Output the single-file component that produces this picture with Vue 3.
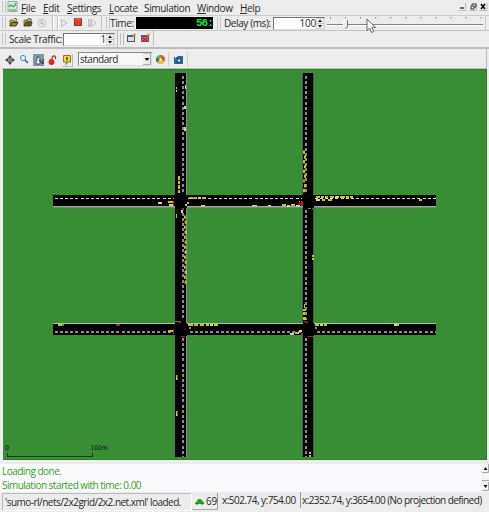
<script setup>
const menus = [
  { k: 'F', r: 'ile', w: 22 },
  { k: 'E', r: 'dit', w: 24 },
  { k: 'S', r: 'ettings', w: 42 },
  { k: 'L', r: 'ocate', w: 35 },
  { k: '', r: 'Simulation', w: 53 },
  { k: 'W', r: 'indow', w: 43 },
  { k: 'H', r: 'elp', w: 30 },
]
const ticks = Array.from({ length: 11 }, (_, i) => 331.5 + i * 15.05)

// [x, y, width, height, colour]
const y = '#c9c02c', r = '#b3241c', w = '#d8d2a0', g = '#24b43a'
const cars = [
  [176, 87, 1, 2, y], [176, 90, 1, 2, w], [185, 85, 1, 4, w], [184, 106, 2, 3, w], [184, 127, 2, 4, w],
  [178, 176, 2, 4, y], [178, 181, 2, 3, y], [178, 185, 2, 4, y], [178, 190, 2, 3, y],
  [158, 202, 4, 2, w], [168, 201, 5, 2, y], [169, 204, 4, 2, w], [173, 201, 1, 5, r],
  [201, 205, 4, 1.5, w], [187, 202, 2, 2, y], [185, 204, 2, 2, y],
  [189, 197, 4, 2, y], [194, 197, 3, 2, y], [198, 197, 3, 2, w], [202, 197, 4, 2, y],
  [182, 208, 2, 2, r], [181, 210, 2, 3, w], [176, 214, 1, 4, y],
  [252, 205, 5, 1.5, w], [268, 205, 3, 1.5, w], [282, 204, 4, 2, y], [287, 205, 3, 2, w], [291, 204, 4, 2, y], [296, 205, 4, 2, w],
  [298, 203, 4, 2, '#872015'], [301, 201, 2, 5, r], [299, 201, 1, 1, w],
  [308, 208, 3, 1, g], [312, 208, 2, 2, r],
  [316, 196, 4, 2, y], [321, 196, 3, 2, y], [325, 196, 3, 2, y], [330, 196, 4, 2, y], [335, 196, 4, 2, w], [340, 196, 5, 2, y], [346, 196, 3, 2, y], [350, 196, 3, 2, y],
  [316, 199, 4, 2, w], [322, 199, 3, 2, y], [328, 199, 4, 2, y], [419, 199, 3, 2, y],
  [175, 321, 3, 1, g], [178, 321, 3, 2, r],
  [188, 324, 5, 2, y], [194, 324, 4, 2, y], [200, 324, 4, 2, y], [206, 324, 3, 2, y], [210, 324, 3, 2, w], [214, 324, 4, 2, y],
  [189, 327, 2, 2, '#888'], [168, 330, 5, 2, y], [173, 329, 1, 5, r], [181, 336, 4, 1, r],
  [312, 255, 2, 2, y], [312, 258, 2, 2, y],
  [304, 304, 1, 4, y], [303, 309, 3, 2, y], [303, 312, 2, 3, y], [303, 317, 3, 3, y], [304, 321, 2, 1, r], [305, 322, 3, 1, r],
  [315, 324, 4, 2, y], [320, 324, 3, 2, w], [324, 324, 3, 2, y], [315, 327, 2, 2, '#888'],
  [290, 333, 4, 2, w], [295, 332, 4, 2, y], [299, 330, 3, 2, w], [301, 333, 2, 2, r], [308, 336, 5, 1, r],
  [58, 324, 4, 2, y], [62, 324, 2, 2, '#777'], [116, 324, 4, 2, r], [394, 324, 3, 2, w], [397, 324, 2, 2, y],
  [176, 375, 1.5, 3, y], [176, 378, 1.5, 2, w], [176, 411, 1.5, 3, y], [176, 414, 1.5, 2, w],
  [309, 452, 2, 2, y], [309, 455, 2, 2, y],
]
// queues standing on the vertical approaches
for (let i = 0; i < 14; i++) cars.push([184 + (i % 2) * 0.6, 215.5 + i * 5, 1.8, 3.3, i % 4 === 3 ? w : y])
for (let i = 0; i < 9; i++) cars.push([303 + (i % 2), 150.5 + i * 4.8, 2, 3.4, i === 6 ? '#c0812c' : y])
</script>

<template>
  <div class="app">
    <header class="menubar">
      <i class="grip" />
      <svg class="logo" width="11" height="12" viewBox="0 0 11 12">
        <rect x="1" y="0.5" width="9" height="10" fill="#d5e8da" stroke="#8db49a" />
        <path d="M2 6Q3 3 5 5T9 2M2 9H9" fill="none" stroke="#3d9c59" stroke-width="1.2" />
      </svg>
      <nav>
        <span v-for="m in menus" :key="m.r" class="menu" :style="{ width: m.w + 'px' }"><u>{{ m.k }}</u>{{ m.r }}</span>
      </nav>
      <svg class="winctl" width="30" height="9" viewBox="0 0 30 9">
        <path d="M.5 8.5H7.5V1M11.5 8.5H18.5V1M21.5 8.5H29V1" stroke="#bbb" fill="none" />
        <path d="M2 6H6" stroke="#222" stroke-width="1.3" />
        <path d="M13 4H16V7H13ZM14 3.5V2H18V5H16" stroke="#333" fill="none" />
        <path d="M23 2L27 7M27 2L23 7" stroke="#000" stroke-width="1.5" />
      </svg>
    </header>

    <div class="bar tools">
      <i class="grip" />
      <svg class="icons run" width="98" height="14" viewBox="6 16 98 14">
        <path d="M10 20H13L14 21H17V22H12L10 26Z" fill="#c8bd35" stroke="#4c4b1c" stroke-width=".7" />
        <path d="M10 26L12 22.5H18L16 26Z" fill="#8f8828" stroke="#26270e" stroke-width=".8" />
        <path d="M14 19Q16 17.5 17 20" fill="none" stroke="#333" />
        <path d="M24 20H27L28 21H31V22H26L24 26Z" fill="#c8bd35" stroke="#4c4b1c" stroke-width=".7" />
        <path d="M24 26L26 22H32L31 26Z" fill="#77732c" stroke="#26270e" stroke-width=".8" />
        <path d="M27 20L29 18.5L32 20M27 24H30" fill="none" stroke="#333" />
        <circle cx="42" cy="23" r="4" fill="#e7e7e7" stroke="#c4c4c4" />
        <path d="M40 23.5H44M42 20V23M40 21L44 25" fill="none" stroke="#c0c0c0" />
        <path d="M52.5 16V30M57.5 16V30" stroke="#c2c2c2" /><path d="M53.5 16V30M58.5 16V30" stroke="#fff" />
        <path d="M61.5 19.5L67 23L61.5 26.5Z" fill="#eee" stroke="#bdbdbd" />
        <rect x="74.5" y="18.5" width="7" height="7" fill="#d94026" stroke="#9c3325" />
        <path d="M75 19H81" stroke="#ec8462" />
        <path d="M88.5 19.5V26.5H90V19.5ZM91.5 19.5L96 23L91.5 26.5Z" fill="#eee" stroke="#bdbdbd" />
        <path d="M101.5 16V30" stroke="#c2c2c2" />
      </svg>
      <i class="grip" />
      <label class="time">Time:</label>
      <output class="lcd">56:</output>
      <i class="grip second" />
      <label class="delay">Delay (ms):</label>
      <div class="spin delaybox">100<svg width="8" height="11" viewBox="0 0 8 11"><path d="M0 0H8V11H0ZM0 5.5H8" fill="#eee" stroke="#aaa" stroke-width=".6" /><path d="M2 4L4 1.5L6 4ZM2 7L4 9.5L6 7Z" fill="#111" /></svg></div>
      <svg class="slider" width="162" height="15" viewBox="326 16 162 15">
        <path v-for="t in ticks" :key="t" :d="`M${t} 17V18.3`" stroke="#777" />
        <path d="M328 24.5H484" stroke="#80808a" /><path d="M328 25.5H484" stroke="#fff" />
        <path d="M344 20H348V27L346 29L344 27Z" fill="#ededed" /><path d="M344.5 27V20.5H347.5" fill="none" stroke="#fff" /><path d="M348.5 20V27L346 28.5" fill="none" stroke="#777" />
        <path d="M486.5 16V30" stroke="#ccc" />
      </svg>
    </div>

    <div class="bar scale">
      <i class="grip" />
      <label class="traffic">Scale Traffic:</label>
      <div class="spin scalebox">1<svg width="8" height="11" viewBox="0 0 8 11"><path d="M0 0H8V11H0ZM0 5.5H8" fill="#eee" stroke="#aaa" stroke-width=".6" /><path d="M2 4L4 1.5L6 4ZM2 7L4 9.5L6 7Z" fill="#111" /></svg></div>
      <svg class="icons" width="40" height="16" viewBox="115 31 40 16">
        <path d="M117.5 31V47M120.5 33V45M123.5 33V45M153.5 31V46" stroke="#bdbdbd" />
        <rect x="127.500" y="35.500" width="7" height="6" fill="#ddd" stroke="#555" /><path d="M127 36H133" stroke="#425d98" stroke-width="2" /><path d="M133 34.500H136" stroke="#ddb23d" stroke-width="2" />
        <rect x="141.500" y="35.500" width="7" height="6" fill="#d45b54" stroke="#75505a" /><path d="M141 36H147" stroke="#425d98" stroke-width="2" /><path d="M143 38L147 41M147 38L143 41" stroke="#b11e1c" /><path d="M147 34.500H150" stroke="#ddb23d" stroke-width="2" />
      </svg>
    </div>

    <main class="view">
      <div class="bar viewtools">
        <svg class="icons" width="76" height="18" viewBox="2 50 76 18">
          <path d="M10 55L12 57.500H8ZM10 65L8 62.500H12ZM5 60L7.500 58V62ZM15 60L12.500 58V62Z" fill="#444" />
          <path d="M7 60H13M10 57V63" stroke="#555" /><circle cx="10" cy="60" r="2.500" fill="none" stroke="#444" />
          <circle cx="23" cy="58" r="2.600" fill="#e4f4ff" stroke="#4a8fca" /><path d="M25 60L28 63" stroke="#315b98" stroke-width="1.500" />
          <rect x="33" y="54" width="11" height="12" fill="#8796a5" />
          <path d="M36 62L38 56L40 59V64H36Z" fill="#dce9f2" stroke="#354658" stroke-width=".8" /><path d="M39 60L43 64V59" stroke="#223" fill="none" />
          <circle cx="51.500" cy="62" r="2.900" fill="#d92922" /><path d="M52 60V57.500Q54 54.500 55.500 57V59" fill="none" stroke="#a33" stroke-width="1.200" />
          <path d="M64 55.500H70.500V62H68L66 64.500V62H63.500V55.500Z" fill="#f2dc36" stroke="#8b7a25" /><path d="M67 57V60M67 60.700V61.500" stroke="#222" stroke-width="1.200" />
          <path d="M62 66.500H72.500V54" stroke="#bbb" fill="none" />
        </svg>
        <div class="combo">standard<svg width="8" height="12" viewBox="0 0 8 12"><path d="M0 0H7.500V11.500H0" fill="#eee" stroke="#aaa" /><path d="M1.500 5H6.500L4 8Z" fill="#111" /></svg></div>
        <svg class="icons" width="38" height="18" viewBox="152 50 38 18">
          <circle cx="160.500" cy="59.500" r="4.500" fill="#5bbd4c" /><path d="M160.500 59.500V55A4.500 4.500 0 0 1 164.500 61.500Z" fill="#df5434" /><path d="M160.500 59.500L164.500 61.500A4.500 4.500 0 0 1 157 62.500Z" fill="#e4c83a" /><path d="M160.500 59.500L157 62.500A4.500 4.500 0 0 1 156.500 57.500Z" fill="#366ac0" /><circle cx="160.500" cy="59.500" r="1.200" fill="#fff" />
          <path d="M168.500 52V66M187.500 52V66" stroke="#ccc" />
          <path d="M174 57H177L178 56H183V64H174Z" fill="#2a6c94" /><circle cx="179" cy="60.500" r="2" fill="#a9e0ef" stroke="#153c56" /><path d="M175 58H176" stroke="#fff" />
        </svg>
      </div>

      <svg class="map" width="484" height="391" viewBox="3 69 484 391" shape-rendering="crispEdges">
        <rect x="3" y="69" width="484" height="391" fill="#398d35" />
        <path d="M3 69.500H487M486.500 69V460M3 459.500H487" stroke="#2d7f2b" />
        <g fill="#000">
          <rect x="175" y="73" width="11" height="384" /><rect x="303" y="73" width="11" height="384" />
          <rect x="53" y="195" width="383" height="11" /><rect x="53" y="324" width="383" height="11" />
        </g>
        <g fill="none">
          <path d="M186.500 73V195M186.500 208V323M186.500 335V457" stroke="#7f937c" />
          <path d="M302.500 73V195M302.500 208V323M302.500 335V457M313.500 73V195M313.500 208V323M313.500 335V457" stroke="#45643f" />
          <path d="M53 206.500H175M187 206.500H303M314 206.500H436" stroke="#aaa3a4" />
          <path d="M53 207.500H175M187 207.500H303M314 207.500H436" stroke="#65985e" />
          <path d="M53 323.500H175M187 323.500H303M314 323.500H436" stroke="#a6c5a1" />
          <path d="M175 201H187M303 201H314M175 329H187M303 329H314" stroke="#000" stroke-width="13" />
          <g stroke="#8b8b8b" stroke-width="2" stroke-dasharray="3 2.120">
            <path d="M183 76V194M183 213V320M183 338V457M306 76V194M306 210V320M306 338V457" />
            <path d="M55 332H174M190 332H301M317 332H436" />
          </g>
          <path d="M55 198.500H174M188 198.500H302M315 198.500H436" stroke="#d9d9d9" stroke-dasharray="3 2.120" />
        </g>
        <g shape-rendering="geometricPrecision">
          <rect v-for="(c, i) in cars" :key="i" :x="c[0]" :y="c[1]" :width="c[2]" :height="c[3]" :fill="c[4]" />
        </g>
        <path d="M7.500 453V456.500H92.500V453" fill="none" stroke="#143b12" />
        <text x="5" y="449.500" class="maptext">0</text><text x="90.500" y="449.500" class="maptext" textLength="17" lengthAdjust="spacingAndGlyphs">100m</text>
      </svg>
    </main>

    <section class="log">
      <div class="lines"><p>Loading done.</p><p>Simulation started with time: 0.00</p></div>
      <svg width="7" height="27" viewBox="0 0 7 27"><rect width="7" height="27" fill="#f5f5f5" /><path d="M0 8.500H6.500V0M0 16.500H7M0 26.500H6.500V18" fill="none" stroke="#aaa" /><path d="M1.500 6L3.500 3L5.500 6ZM1.500 21L3.500 24L5.500 21Z" fill="#111" /></svg>
    </section>

    <footer>
      <div class="file">'sumo-rl/nets/2x2grid/2x2.net.xml' loaded.</div>
      <div class="count"><svg width="9" height="7" viewBox="0 0 9 7"><path d="M0 5L2 3L3 1H6L7.500 3L9 4V6H0Z" fill="#28a329" /><path d="M1 6H3M6 6H8" stroke="#26511e" /></svg><span>69</span></div>
      <div class="xy">x:502.74, y:754.00</div>
      <div class="geo">x:2352.74, y:3654.00 (No projection defined)</div>
    </footer>

    <svg class="cursor" width="11" height="16" viewBox="0 0 11 16"><path d="M1 1V12.500L3.600 10L5.600 14.500L7.700 13.500L5.800 9.300H9.500Z" fill="#fff" stroke="#555" stroke-width=".9" /></svg>
  </div>
</template>

<style>
body { margin: 0; background: #ececec; overflow: hidden; }
</style>
<style scoped>
* { box-sizing: border-box; }
.app { position: relative; width: 489px; height: 512px; display: flex; flex-direction: column; background: #ececec; color: #292929; font: 10px/14px "Open Sans", "Noto Sans", sans-serif; letter-spacing: -.2px; white-space: nowrap; overflow: hidden; }
svg { display: block; flex: none; }
.grip { flex: none; width: 4px; height: 12px; margin-left: 2px; border-left: 1px solid #c4c4c4; border-right: 1px solid #c4c4c4; }
.menubar { height: 16px; display: flex; align-items: flex-start; padding-top: 1px; border-bottom: 1px solid #ccc; }
.logo { margin: 0 3px 0 1px; }
nav { display: flex; }
.menu { letter-spacing: -.35px; }
.menu u { text-underline-offset: 1px; }
.winctl { margin: 1px 1px 0 auto; }
.bar { display: flex; align-items: center; flex: none; }
.tools { height: 15px; border-bottom: 1px solid #c5c5c5; }
.time { width: 26px; letter-spacing: -.35px; }
.lcd { display: flex; justify-content: flex-end; align-items: center; width: 77px; height: 12px; background: #000; color: #27dd3b; font: bold 11px/12px "Liberation Mono", monospace; letter-spacing: -.9px; }
.second { margin-left: 4px; }
.delay { width: 52px; padding-left: 3px; letter-spacing: -.4px; }
.spin { display: flex; flex: none; justify-content: flex-end; align-items: center; background: #fff; border: 1px solid #777; border-right-color: #ddd; border-bottom-color: #ddd; }
.delaybox { width: 52px; height: 13px; }
.scale { height: 18px; border-bottom: 2px solid #bdbdbd; }
.traffic { width: 57px; padding-left: 3px; letter-spacing: -.38px; }
.scalebox { width: 52px; height: 13px; }
.view { height: 412px; padding-left: 3px; }
.viewtools { height: 20px; margin: 0 2px 0 -1px; border-bottom: 1px solid #bbb; border-right: 1px solid #bbb; }
.combo { display: flex; justify-content: space-between; align-items: center; width: 74px; height: 14px; padding-left: 1px; background: #f8f8f8; border: 1px solid #888; border-right-color: #ddd; border-bottom-color: #ddd; letter-spacing: -.5px; }
.maptext { font: 6.5px "DejaVu Sans", sans-serif; letter-spacing: 0; fill: #111; }
.log { display: flex; justify-content: space-between; height: 28px; margin-top: 3px; background: #fafafc; }
.lines { padding: 1px 0 0 2px; }
p { margin: 0; color: #3e9a2c; line-height: 13.500px; letter-spacing: -.52px; }
footer { display: flex; height: 20px; align-items: flex-start; line-height: 15px; letter-spacing: -.52px; }
footer > div { flex: none; }
.file { width: 190px; height: 18px; margin: 1px 0 0 2px; padding: 1px 0 0 2px; border: 1px solid #bbb; border-right-color: #fff; border-bottom-color: #fff; }
.count { display: flex; align-items: center; gap: 2px; width: 26px; height: 17px; margin-top: 1px; padding-left: 3px; border-right: 1px solid #999; border-bottom: 1px solid #aaa; letter-spacing: -.2px; }
.xy { width: 83px; padding: 1px 0 0 4px; border-right: 1px solid #999; }
.geo { padding: 1px 0 0 1px; letter-spacing: -.57px; }
.cursor { position: absolute; left: 366px; top: 18px; }
</style>
